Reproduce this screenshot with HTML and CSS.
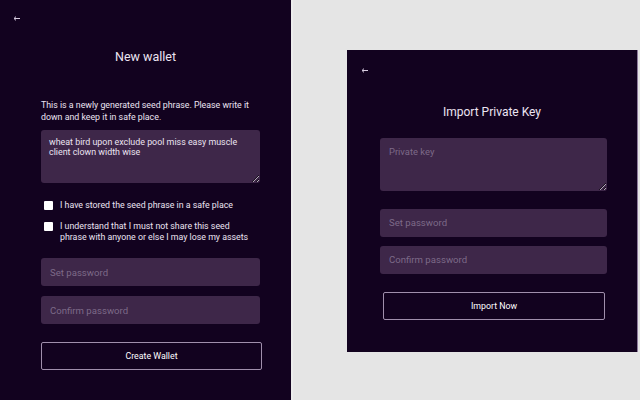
FILE: index.html
```html
<!DOCTYPE html>
<html lang="en">
    <head>
        <title>Wallet</title>
        <link rel="stylesheet" href="styles.css">
    </head>
    <body>
        <div class="screen new-wallet">
            <div class="back">
                <svg width="7" height="5" viewBox="0 0 7 5"><path d="M7 2.5H1.2M3 0.6L1 2.5L3 4.4" stroke="#d8cce0" stroke-width="1" fill="none"/></svg>
            </div>
            <h1>New wallet</h1>
            <p class="intro">This is a newly generated seed phrase. Please write it down and keep it in safe place.</p>
            <textarea class="seed">wheat bird upon exclude pool miss easy muscle client clown width wise</textarea>
            <label class="check"><span class="box"></span><span>I have stored the seed phrase in a safe place</span></label>
            <label class="check"><span class="box"></span><span>I understand that I must not share this seed phrase with anyone or else I may lose my assets</span></label>
            <input type="password" class="field first" placeholder="Set password" />
            <input type="password" class="field" placeholder="Confirm password" />
            <button class="action">Create Wallet</button>
        </div>

        <div class="screen import">
            <div class="back">
                <svg width="7" height="5" viewBox="0 0 7 5"><path d="M7 2.5H1.2M3 0.6L1 2.5L3 4.4" stroke="#d8cce0" stroke-width="1" fill="none"/></svg>
            </div>
            <h1>Import Private Key</h1>
            <textarea class="key" placeholder="Private key"></textarea>
            <input type="password" class="field first" placeholder="Set password" />
            <input type="password" class="field" placeholder="Confirm password" />
            <button class="action">Import Now</button>
        </div>
    </body>
</html>
```

FILE: styles.css
```css
body {
    margin: 0;
    background-color: #e5e5e5;
    font-family: Roboto, "Helvetica Neue", Helvetica, sans-serif;
    color: #ece4f2;
    display: flex;
    align-items: flex-start;
    height: 400px;
    overflow: hidden;
}
.screen {
    background-color: #12021f;
    box-sizing: border-box;
    display: flex;
    flex-direction: column;
}
.new-wallet {
    width: 293px;
    height: 400px;
    padding: 16px 31px 0 41px;
    border-right: 2px solid #ececec;
}
.import {
    width: 291px;
    margin: 50px 0 0 54px;
    height: 302px;
    padding: 16px 30px 0 33px;
    border-right: 1px solid #8e7b9c;
}
.back {
    height: 6px;
    line-height: 0;
}
.new-wallet .back {
    margin-left: -28px;
}
.import .back {
    margin-left: -19px;
    margin-top: 2px;
}
h1 {
    font-size: 12.5px;
    font-weight: 400;
    text-align: center;
    margin: 0;
    line-height: 16px;
}
.new-wallet h1 {
    margin: 27px -31px 0 -41px;
}
.import h1 {
    font-size: 12px;
    margin: 30px -30px 0 -33px;
}
.intro {
    font-size: 8.8px;
    line-height: 11.5px;
    margin: 35px 0 0;
}
textarea, .field {
    font-family: inherit;
    border: 0;
    border-radius: 3px;
    background-color: #3e2749;
    color: #ece4f2;
    box-sizing: border-box;
    outline: none;
    width: 100%;
}
textarea {
    font-size: 8.9px;
    line-height: 9.5px;
    padding: 8px 8px;
    resize: vertical;
}
textarea::placeholder, .field::placeholder {
    color: #7d6a88;
}
.seed {
    height: 53px;
    margin-top: 7px;
}
.key {
    height: 53px;
    margin-top: 18px;
    padding: 9px 9px;
    font-size: 9.4px;
}
.check {
    display: flex;
    align-items: flex-start;
    font-size: 8.8px;
    line-height: 11px;
    margin-top: 17px;
    padding-right: 10px;
}
.check + .check {
    margin-top: 9.5px;
}
.box {
    flex: none;
    width: 9px;
    height: 9px;
    background-color: #fff;
    border-radius: 1px;
    margin: 1px 7px 0 3px;
}
.field {
    height: 28px;
    font-size: 9.6px;
    padding: 0 9px;
    margin-top: 10px;
}
.new-wallet .field.first {
    margin-top: 15.5px;
}
.import .field.first {
    margin-top: 18px;
}
.import .field {
    height: 27.5px;
    margin-top: 9.5px;
}
.action {
    font-family: inherit;
    font-size: 8.8px;
    color: #fff;
    background-color: #12021f;
    border: 1px solid #a08fac;
    border-radius: 2px;
    height: 28px;
    margin-top: 18px;
    cursor: pointer;
}
.new-wallet .action {
    width: 221px;
}
.import .action {
    width: 222px;
    margin-left: 3px;
}
```
